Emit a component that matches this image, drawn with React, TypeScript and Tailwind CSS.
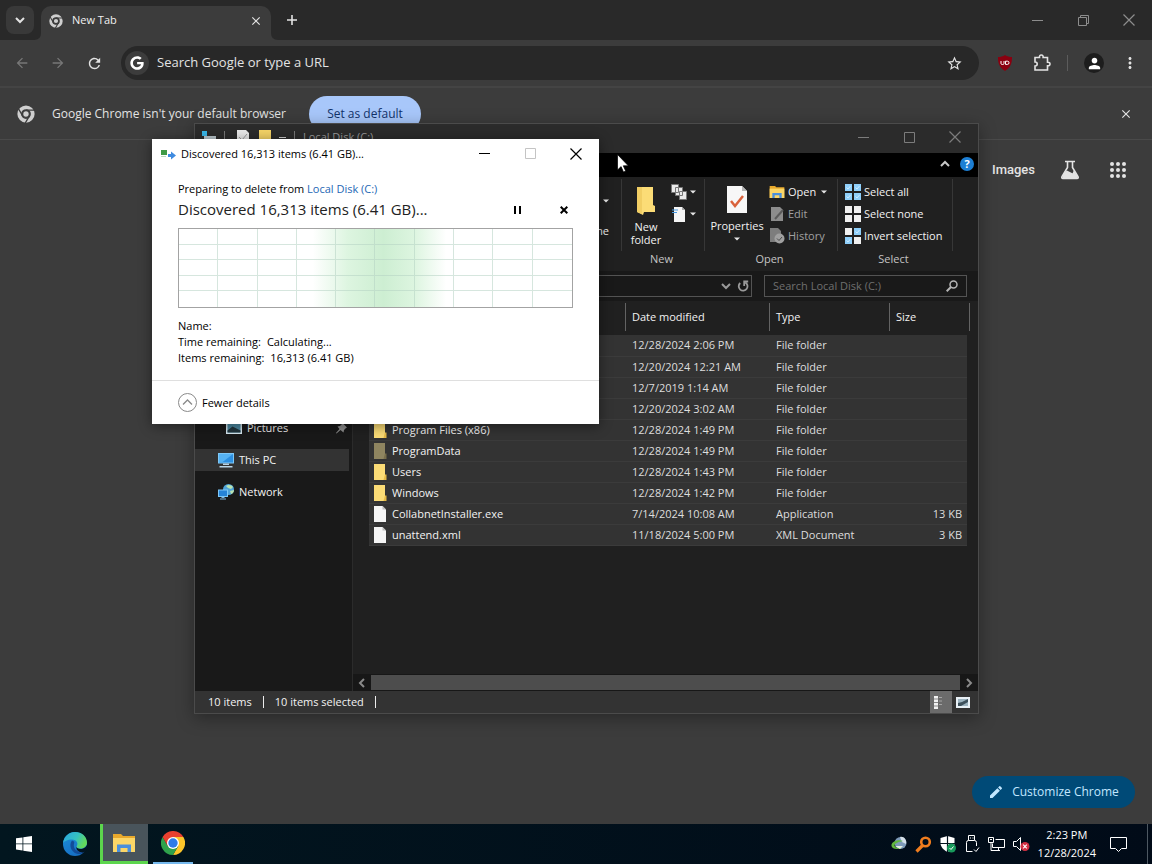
import type { ReactNode } from "react";
import { FaGoogle } from "react-icons/fa6";
import {
  MdArrowBack,
  MdArrowForward,
  MdClose,
  MdEdit,
  MdMoreVert,
  MdPerson,
  MdRefresh,
  MdStarBorder,
} from "react-icons/md";

const files = [
  { name: "", date: "12/28/2024 2:06 PM", type: "File folder", size: "", icon: "folder" },
  { name: "", date: "12/20/2024 12:21 AM", type: "File folder", size: "", icon: "folder" },
  { name: "", date: "12/7/2019 1:14 AM", type: "File folder", size: "", icon: "folder" },
  { name: "", date: "12/20/2024 3:02 AM", type: "File folder", size: "", icon: "folder" },
  { name: "Program Files (x86)", date: "12/28/2024 1:49 PM", type: "File folder", size: "", icon: "folder" },
  { name: "ProgramData", date: "12/28/2024 1:49 PM", type: "File folder", size: "", icon: "hidden" },
  { name: "Users", date: "12/28/2024 1:43 PM", type: "File folder", size: "", icon: "folder" },
  { name: "Windows", date: "12/28/2024 1:42 PM", type: "File folder", size: "", icon: "folder" },
  { name: "CollabnetInstaller.exe", date: "7/14/2024 10:08 AM", type: "Application", size: "13 KB", icon: "file" },
  { name: "unattend.xml", date: "11/18/2024 5:00 PM", type: "XML Document", size: "3 KB", icon: "file" },
];

/* ---------- icons ---------- */

function Minimize() {
  return (
    <svg width="11" height="11" viewBox="0 0 11 11" stroke="currentColor">
      <path d="M0 5.5h11" />
    </svg>
  );
}

function Maximize() {
  return (
    <svg width="11" height="11" viewBox="0 0 11 11" fill="none" stroke="currentColor">
      <path d="M.5.5h10v10H.5z" />
    </svg>
  );
}

function Restore() {
  return (
    <svg width="11" height="11" viewBox="0 0 11 11" fill="none" stroke="currentColor">
      <path d="M.5 2.5h8v8h-8zM2.5 2.5v-2h8v8h-2" />
    </svg>
  );
}

function Close() {
  return (
    <svg width="12" height="12" viewBox="0 0 12 12" stroke="currentColor" strokeWidth="1.2">
      <path d="M.5.5l11 11M11.5.5l-11 11" />
    </svg>
  );
}

function Caret() {
  return (
    <svg width="6" height="4" viewBox="0 0 6 4" fill="#e6e6e6">
      <path d="M0 .5h6L3 3.5z" />
    </svg>
  );
}

function Chevron({ className }: { className?: string }) {
  return (
    <svg width="10" height="10" viewBox="0 0 10 10" fill="none" stroke="currentColor" strokeWidth="2" className={className}>
      <path d="M1 3l4 4 4-4" />
    </svg>
  );
}

function ChromeMono({ size }: { size: number }) {
  return (
    <svg width={size} height={size} viewBox="0 0 24 24" fill="none" stroke="#cfcfcf">
      <circle cx="12" cy="12" r="9" strokeWidth="5" />
      <circle cx="12" cy="12" r="4.500" fill="#cfcfcf" stroke="#3c3c3c" strokeWidth="1.800" />
      <path d="M12 6.800h11M7.500 14.600L2 5M16.500 14.600L11 24" stroke="#3c3c3c" strokeWidth="1.800" />
    </svg>
  );
}

function FileIcon({ kind }: { kind: string }) {
  if (kind === "file") {
    return (
      <svg width="14" height="16" viewBox="0 0 14 16">
        <path d="M1 0h8.500L13 3.500V16H1z" fill="#f5f5f5" />
        <path d="M9.500 0v3.500H13z" fill="#bdbdbd" />
      </svg>
    );
  }
  const hidden = kind === "hidden";
  return (
    <svg width="14" height="16" viewBox="0 0 14 16">
      <path d="M1 0h11v12l1 .5V16H1z" fill={hidden ? "#8f8560" : "#fbdc76"} />
      <path d="M12 10.500h1.500V16H10.500z" fill={hidden ? "#776d4a" : "#e5b945"} />
    </svg>
  );
}

function SelectIcon({ cells }: { cells: string[] }) {
  return (
    <svg width="16" height="16" viewBox="0 0 16 16">
      {cells.map((fill, i) => (
        <g key={i}>
          <rect x={i % 2 ? 9 : 0} y={i > 1 ? 9 : 0} width="7" height="7" fill={fill} />
          {fill === "#8fd0fb" && (
            <path
              d={`M${i % 2 ? 10.5 : 1.5} ${i > 1 ? 12.5 : 3.5}l1.500 1.500 2.500-3`}
              fill="none"
              stroke="#cdeaff"
            />
          )}
        </g>
      ))}
    </svg>
  );
}

function FolderOpen({ size }: { size: number }) {
  return (
    <svg width={size} height={size} viewBox="0 0 24 24">
      <path d="M1 3h8l2 2h12v16H1z" fill="#e8a92c" />
      <path d="M1 7h22v14H1z" fill="#fbd667" />
      <path d="M5 13.500h14V21h-3.500v-4h-7v4H5z" fill="#4a8fdb" />
    </svg>
  );
}

function ChromeColor() {
  return (
    <svg width="24" height="24" viewBox="0 0 24 24">
      <path d="M12 12V6h10.400A12 12 0 0 1 12 24l5.200-9z" fill="#fcc52a" />
      <path d="M12 12l5.200 3L12 24A12 12 0 0 1 1.600 6l5.200 9z" fill="#2fa24c" />
      <path d="M12 6h10.400A12 12 0 0 0 1.600 6l5.200 9z" fill="#e8402f" />
      <circle cx="12" cy="12" r="6" fill="#fff" />
      <circle cx="12" cy="12" r="4.700" fill="#2c7be8" />
    </svg>
  );
}

function EdgeLogo() {
  return (
    <svg width="24" height="24" viewBox="0 0 24 24">
      <defs>
        <linearGradient id="edgeTop" x1="0" y1="0" x2="1" y2="0.400">
          <stop offset="0" stopColor="#2aa5e0" />
          <stop offset="0.600" stopColor="#35c1c0" />
          <stop offset="1" stopColor="#63d95c" />
        </linearGradient>
        <linearGradient id="edgeBody" x1="0" y1="0" x2="0.500" y2="1">
          <stop offset="0" stopColor="#1c8fd8" />
          <stop offset="1" stopColor="#1670c4" />
        </linearGradient>
      </defs>
      <circle cx="12" cy="12" r="12" fill="url(#edgeBody)" />
      <path
        d="M.1 11C.8 4.800 6 0 12 0c7 0 12 4.800 12 10.500 0 4-3.200 6-6.500 6-3 0-4.700-1.200-3.700-2.600 1.700-2.500-.3-6.400-4.800-6.400C4.500 7.500 1 9.500.1 11z"
        fill="url(#edgeTop)"
      />
      <path d="M9 8.500C5.500 13 8 20 14 21.800c3 .8 6-.3 8-2.300C19 20.500 11 20 10.800 13.500c0-2 .9-2.700.2-4z" fill="#124c98" />
      <path d="M13.800 14c-1.200 2.200 2.600 3.600 5.700 2.700 2.500-.7 3.800-2.200 4.300-3.700.6 3-.5 6-2.500 7.200-4 1-9.500-2-7.500-6.200z" fill="#021521" />
    </svg>
  );
}

function ThisPcIcon() {
  return (
    <svg width="16" height="16" viewBox="0 0 16 16">
      <path d="M0 1h16v10.500H0z" fill="#7ec8f7" />
      <path d="M1 2h14v8.500H1z" fill="#2d8fe0" />
      <path d="M1 2h14L4 10.500H1z" fill="#56b2f2" />
      <path d="M5 11.500h6V13H5zM1.500 14h13v1.500h-13z" fill="#b9d4e6" />
    </svg>
  );
}

function NetworkIcon() {
  return (
    <svg width="16" height="16" viewBox="0 0 16 16">
      <circle cx="10.500" cy="5.500" r="5.500" fill="#4fa3d8" />
      <path d="M8 2c2-2 6-1 7 1l-2 2-3-1zM12 7l4-1c0 2-1 3.500-3 4z" fill="#b9e3b0" />
      <path d="M0 5.500h10V13H0z" fill="#7ec8f7" />
      <path d="M1 6.500h8V12H1z" fill="#2583d8" />
      <path d="M3.500 13h3v1h-3zM2 14.500h6v1H2z" fill="#7fb5dd" />
    </svg>
  );
}

/* ---------- browser ---------- */

function TabStrip() {
  return (
    <header className="flex h-10 items-end bg-[#292929]">
      <button aria-label="Search tabs" className="mb-[6px] ml-[6px] flex h-7 w-7 items-center justify-center rounded-lg bg-[#393939]">
        <Chevron />
      </button>
      <svg width="7" height="7" viewBox="0 0 7 7" fill="#3c3c3c">
        <path d="M7 0v7H0q7 0 7-7z" />
      </svg>
      <div className="flex h-[34px] w-[230px] items-center rounded-t-[10px] bg-[#3c3c3c] pb-[5px] pl-2">
        <ChromeMono size={14} />
        <span className="ml-[9px] flex-1 text-[11px] text-[#f0f0f0]">New Tab</span>
        <button aria-label="Close tab" className="mr-2">
          <MdClose size={14} />
        </button>
      </div>
      <svg width="7" height="7" viewBox="0 0 7 7" fill="#3c3c3c">
        <path d="M0 0v7h7q-7 0-7-7z" />
      </svg>
      <button aria-label="New tab" className="mb-[14px] ml-2">
        <svg width="12" height="12" viewBox="0 0 12 12" stroke="currentColor" strokeWidth="1.600">
          <path d="M6 1v10M1 6h10" />
        </svg>
      </button>
      <div className="ml-auto flex h-10 text-[#8d8d8d]">
        <button aria-label="Minimize" className="flex w-[46px] items-center justify-center"><Minimize /></button>
        <button aria-label="Restore" className="flex w-[46px] items-center justify-center"><Restore /></button>
        <button aria-label="Close" className="flex w-[46px] items-center justify-center"><Close /></button>
      </div>
    </header>
  );
}

function Toolbar() {
  return (
    <div className="flex h-12 items-center border-b-2 border-[#444] pr-[13px] pl-[14px]">
      <button aria-label="Back" className="mr-5 text-[#777]"><MdArrowBack size={16} /></button>
      <button aria-label="Forward" className="mr-5 text-[#777]"><MdArrowForward size={16} /></button>
      <button aria-label="Reload" className="mr-[18px]"><MdRefresh size={17} /></button>
      <div className="flex h-[34px] flex-1 items-center rounded-full bg-[#282828] pr-4 pl-1">
        <span className="flex h-6 w-6 items-center justify-center rounded-full bg-[#3c3c3c]">
          <FaGoogle size={14} className="text-white" />
        </span>
        <input
          aria-label="Address and search bar"
          placeholder="Search Google or type a URL"
          className="ml-2 min-w-0 flex-1 bg-transparent text-[13px] outline-none placeholder:text-[#e3e3e3]"
        />
        <button aria-label="Bookmark this tab"><MdStarBorder size={17} /></button>
      </div>
      <button aria-label="uBlock Origin" className="ml-[18px]">
        <svg width="16" height="16" viewBox="0 0 16 16">
          <path d="M8 0c2 1.500 4.500 2 7 2 0 6-1 10-7 14C2 12 1 8 1 2c2.500 0 5-.5 7-2z" fill="#8b0010" />
          <path d="M4 6v2.500q0 1 1.500 1t1.500-1V6M8.500 6.200h2q1.500 0 1.500 1.600t-1.500 1.600h-2z" fill="none" stroke="#fff" />
        </svg>
      </button>
      <button aria-label="Extensions" className="ml-5">
        <svg width="18" height="18" viewBox="0 0 18 18" fill="none" stroke="currentColor" strokeWidth="1.600">
          <path d="M2 3.500h4.500q-.3-2.500 1.800-2.500t1.800 2.500h4.400v4.700q2.500-.2 2.500 1.800t-2.500 1.800V16H2v-4q2.200 0 2.200-2T2 8z" />
        </svg>
      </button>
      <span className="ml-4 h-4 w-px bg-[#5c5c5c]" />
      <button aria-label="Profile" className="ml-4 flex h-5 w-5 items-center justify-center rounded-full bg-[#1d1d1d] text-white">
        <MdPerson size={17} />
      </button>
      <button aria-label="Menu" className="ml-[17px]"><MdMoreVert size={18} /></button>
    </div>
  );
}

function InfoBar() {
  return (
    <div className="flex h-[52px] items-center border-b border-[#4a4a4a] pr-[19px] pl-[17px]">
      <ChromeMono size={18} />
      <span className="ml-[17px] w-[241px] text-[12px]">Google Chrome isn't your default browser</span>
      <button className="ml-4 h-9 w-28 rounded-full bg-[#a8c7fa] text-[12px] font-medium text-[#12336b]">Set as default</button>
      <button aria-label="Dismiss" className="ml-auto"><MdClose size={14} /></button>
    </div>
  );
}

function NewTabPage() {
  return (
    <main className="flex flex-1 flex-col items-end justify-between pb-4">
      <nav className="flex items-center pt-5 pr-[26px]">
        <a href="#images" className="font-[Roboto,sans-serif] text-[13px] font-medium">Images</a>
        <button aria-label="Labs" className="ml-[25px]">
          <svg width="20" height="20" viewBox="0 0 20 20" fill="none" stroke="currentColor" strokeWidth="1.600">
            <path d="M5 1.500h10M7.500 1.500v6L2 16.500q-.8 2 1 2h14q1.800 0 1-2l-5.500-9v-6" />
            <path d="M4.500 13.500l2.500-2 6 3 1-2.500 3 4.500v1.500H3z" fill="currentColor" />
          </svg>
        </button>
        <button aria-label="Google apps" className="ml-[30px]">
          <svg width="16" height="16" viewBox="0 0 16 16" fill="currentColor">
            {[2, 8, 14].map((y) => [2, 8, 14].map((x) => <circle key={`${x}${y}`} cx={x} cy={y} r="2" />))}
          </svg>
        </button>
      </nav>
      <button className="mr-[17px] flex h-8 w-[163px] items-center justify-center gap-2 rounded-full bg-[#004a77] text-[12px] font-medium text-[#c2e7ff]">
        <MdEdit size={16} />
        Customize Chrome
      </button>
    </main>
  );
}

/* ---------- file explorer ---------- */

function RibbonGroup({ label, width, children }: { label: string; width: string; children: ReactNode }) {
  return (
    <section className={`flex flex-col pt-[2px] ${width}`}>
      <div className="flex h-[72px] border-r border-[#373737] pt-[2px]">{children}</div>
      <div className="pr-1 text-center leading-4 text-[#c4c4c4]">{label}</div>
    </section>
  );
}

function RibbonButton({ icon, children, disabled }: { icon: ReactNode; children: ReactNode; disabled?: boolean }) {
  return (
    <button disabled={disabled} className="flex h-[22px] items-center gap-[3px] whitespace-nowrap disabled:text-[#a0a0a0]">
      {icon}
      {children}
    </button>
  );
}

function Ribbon() {
  const on = "#8fd0fb";
  const off = "#f0f0f0";
  return (
    <div className="flex h-[94px] bg-[#202020]">
      <section className="flex w-[427px] flex-col pt-[2px]">
        <div className="flex h-[72px] items-end justify-end border-r border-[#373737] pr-3 pb-3">
          <div className="flex flex-col items-end gap-5">
            <Caret />
            <span>Rename</span>
          </div>
        </div>
      </section>
      <RibbonGroup label="New" width="w-[83px]">
        <button className="flex w-12 flex-col items-center leading-[13px]">
          <svg width="20" height="30" viewBox="0 0 20 30" className="mt-[5px] mb-1">
            <path d="M1 1h16v18l2 1v6H8l-1 3-6-3z" fill="#fbdc76" />
            <path d="M1 1h5v27l-5-2z" fill="#f1ce64" />
          </svg>
          New folder
        </button>
        <div className="flex flex-col pl-px">
          <RibbonButton
            icon={
              <svg width="16" height="16" viewBox="0 0 16 16" stroke="#777" fill="#eaeaea">
                <path d="M.5.5h7v8h-7zM4.500 3.500h7v8h-7zM8.500 7.500h7v8h-7z" />
              </svg>
            }
          >
            <Caret />
          </RibbonButton>
          <RibbonButton
            icon={
              <svg width="16" height="16" viewBox="0 0 16 16">
                <path d="M3 1h8l3 3v12H3z" fill="#f5f5f5" />
                <path d="M11 1v3h3z" fill="#aaa" />
                <path d="M1 4h6M1 6.500h5" stroke="#4a9be0" />
              </svg>
            }
          >
            <Caret />
          </RibbonButton>
        </div>
      </RibbonGroup>
      <RibbonGroup label="Open" width="w-[133px]">
        <button className="flex w-16 flex-col items-center leading-[14px]">
          <svg width="22" height="29" viewBox="0 0 22 29" className="mt-1 mb-[5px]">
            <path d="M1 1h15l5 5v22H1z" fill="#f7f7f7" />
            <path d="M16 1v5h5z" fill="#b5b5b5" />
            <path d="M5 16l4 5 8-10" fill="none" stroke="#d9623b" strokeWidth="2.500" />
          </svg>
          Properties
          <span className="mt-1"><Caret /></span>
        </button>
        <div className="flex flex-col">
          <RibbonButton icon={<FolderOpen size={16} />}>
            Open
            <span className="ml-[2px]"><Caret /></span>
          </RibbonButton>
          <RibbonButton
            disabled
            icon={
              <svg width="16" height="16" viewBox="0 0 16 16">
                <path d="M2 1h9l3 3v11H2z" fill="#8c8c8c" />
                <path d="M14 4l-8 9" stroke="#5a5a5a" strokeWidth="2" />
              </svg>
            }
          >
            Edit
          </RibbonButton>
          <RibbonButton
            disabled
            icon={
              <svg width="16" height="16" viewBox="0 0 16 16">
                <path d="M1 0h8l3 3v11H1z" fill="#7d7d7d" />
                <circle cx="10.500" cy="10.500" r="5" fill="#a0a0a0" />
                <path d="M8 10.500l2 2 3-3.500" fill="none" stroke="#4a4a4a" />
              </svg>
            }
          >
            History
          </RibbonButton>
        </div>
      </RibbonGroup>
      <RibbonGroup label="Select" width="w-[115px]">
        <div className="flex flex-col pl-[7px]">
          <RibbonButton icon={<SelectIcon cells={[on, on, on, on]} />}>Select all</RibbonButton>
          <RibbonButton icon={<SelectIcon cells={[off, off, off, off]} />}>Select none</RibbonButton>
          <RibbonButton icon={<SelectIcon cells={[off, on, on, off]} />}>Invert selection</RibbonButton>
        </div>
      </RibbonGroup>
    </div>
  );
}

function ExplorerTitle() {
  return (
    <div className="flex h-[29px] items-center bg-[#2b2b2b] pb-[3px] pl-[7px]">
      <svg width="14" height="14" viewBox="0 0 14 14">
        <path d="M0 1h5v5H0z" fill="#38b6e8" />
        <path d="M2 6h12v5H2z" fill="#b8c4ca" />
      </svg>
      <span className="ml-2 h-3 w-px bg-[#777]" />
      <svg width="12" height="14" viewBox="0 0 12 14" className="ml-3">
        <path d="M0 0h9l3 3v11H0z" fill="#e9e9e9" />
        <path d="M2 7l3 3 5-6" stroke="#999" fill="none" />
      </svg>
      <svg width="12" height="14" viewBox="0 0 12 14" className="ml-[10px]">
        <path d="M0 0h12v14H0z" fill="#f4d366" />
      </svg>
      <span className="ml-2 h-px w-[7px] bg-[#ccc]" />
      <span className="ml-2 h-3 w-px bg-[#777]" />
      <span className="ml-2 text-[#999]">Local Disk (C:)</span>
      <div className="ml-auto flex h-full text-[#7c7c7c]">
        <button aria-label="Minimize" className="flex w-[45px] items-center justify-center"><Minimize /></button>
        <button aria-label="Maximize" className="flex w-[46px] items-center justify-center"><Maximize /></button>
        <button aria-label="Close" className="flex w-[46px] items-center justify-center"><Close /></button>
      </div>
    </div>
  );
}

function AddressRow() {
  return (
    <div className="flex h-[30px] items-center justify-end gap-3 bg-[#191919] pr-[11px]">
      <div className="ml-4 flex h-[22px] flex-1 items-center justify-end gap-[6px] border border-[#535353] pr-[2px] text-[#9a9a9a]">
        <button aria-label="Previous locations"><Chevron /></button>
        <button aria-label="Refresh">
          <svg width="12" height="12" viewBox="0 0 12 12" fill="none" stroke="currentColor" strokeWidth="1.800">
            <path d="M3.200 3a4.400 4.400 0 1 0 5 -.6" />
            <path d="M7.200 6V1.500h4" />
          </svg>
        </button>
      </div>
      <div className="flex h-[22px] w-[203px] items-center border border-[#535353] px-2">
        <input
          aria-label="Search Local Disk (C:)"
          placeholder="Search Local Disk (C:)"
          className="min-w-0 flex-1 bg-transparent outline-none placeholder:text-[#6f6f6f]"
        />
        <svg width="12" height="12" viewBox="0 0 12 12" fill="none" stroke="#b5b5b5" strokeWidth="1.500">
          <circle cx="7.500" cy="4.500" r="3.500" />
          <path d="M5 7L.7 11.300" strokeWidth="2" />
        </svg>
      </div>
    </div>
  );
}

function Sidebar() {
  return (
    <aside className="flex w-[158px] flex-col gap-[10px] border-r border-[#2b2b2b] bg-[#191919] pt-[116px] pr-[3px]">
      <a href="#pictures" className="flex h-[22px] items-center pl-[31px]">
        <svg width="16" height="12" viewBox="0 0 16 12">
          <path d="M0 0h16v12H0z" fill="#d6e6ee" />
          <path d="M1.500 1.500h13v9h-13z" fill="#4d8aa3" />
          <path d="M1.500 10.500v-2l5-4 8 4v2z" fill="#22353d" />
        </svg>
        <span className="ml-[5px] flex-1">Pictures</span>
        <svg width="11" height="11" viewBox="0 0 11 11" fill="#8f8f8f" className="mr-[2px]">
          <path d="M6.500 0L11 4.500l-1 .5-2 2-.5 2.500-3-2.500L.5 10.500 0 10l3.500-4L1.500 3.500 4 3l2-2z" />
        </svg>
      </a>
      <a href="#this-pc" className="flex h-[22px] items-center gap-[5px] bg-[#333] pl-[23px]">
        <ThisPcIcon />
        This PC
      </a>
      <a href="#network" className="flex h-[22px] items-center gap-[5px] pl-[23px]">
        <NetworkIcon />
        Network
      </a>
    </aside>
  );
}

function FileList() {
  return (
    <div className="flex min-w-0 flex-1 flex-col bg-[#202020]">
      <div className="flex-1 pl-4">
        <table className="w-[598px] table-fixed border-collapse">
          <thead>
            <tr className="h-[34px] text-left">
              <th aria-label="Name" className="w-[257px] p-0 pb-[2px]"><div className="h-7 border-r border-[#636363]" /></th>
              <th className="w-36 p-0 pb-[2px] font-normal"><div className="h-7 border-r border-[#636363] pl-[6px] leading-7">Date modified</div></th>
              <th className="w-[120px] p-0 pb-[2px] font-normal"><div className="h-7 border-r border-[#636363] pl-[6px] leading-7">Type</div></th>
              <th className="w-[77px] p-0 pb-[2px] font-normal"><div className="-mr-[3px] h-7 border-r border-[#636363] pl-[6px] leading-7">Size</div></th>
            </tr>
          </thead>
          <tbody>
            {files.map((file) => (
              <tr key={file.date + file.type} className="h-[21px] border-b border-[#3b3b3b] bg-[#333]">
                <td className="p-0">
                  <div className="flex items-center gap-[5px] pl-1">
                    <FileIcon kind={file.icon} />
                    {file.name}
                  </div>
                </td>
                <td className="p-0 pl-[6px] text-[#dedede]">{file.date}</td>
                <td className="p-0 pl-[6px] text-[#dedede]">{file.type}</td>
                <td className="p-0 pr-[5px] text-right text-[#dedede]">{file.size}</td>
              </tr>
            ))}
          </tbody>
        </table>
      </div>
      <div className="flex h-[17px] items-center bg-[#171717] text-[#8a8a8a]">
        <button aria-label="Scroll left" className="flex w-[18px] justify-center">
          <Chevron className="rotate-90" />
        </button>
        <div className="h-[15px] flex-1 bg-[#4d4d4d]" />
        <button aria-label="Scroll right" className="flex w-[18px] justify-center">
          <Chevron className="-rotate-90" />
        </button>
      </div>
    </div>
  );
}

function ExplorerWindow() {
  return (
    <section className="absolute top-[123px] left-[194px] flex h-[591px] w-[785px] flex-col border border-[#4b4b4b] text-[11px] leading-4 text-[#f2f2f2] shadow-[0_4px_16px_rgba(0,0,0,0.35)]">
      <ExplorerTitle />
      <div className="flex h-6 items-center justify-end gap-[10px] bg-black pr-1 pb-[2px]">
        <button aria-label="Collapse ribbon" className="text-[#c8c8c8]"><Chevron className="rotate-180" /></button>
        <button aria-label="Help" className="h-[14px] w-[14px] rounded-full bg-[#1d7fd4] text-[11px] leading-[14px] font-bold text-white">?</button>
      </div>
      <Ribbon />
      <AddressRow />
      <div className="flex min-h-0 flex-1">
        <Sidebar />
        <FileList />
      </div>
      <footer className="flex h-[22px] items-center bg-[#333] pl-[13px]">
        <span>10 items</span>
        <span className="mx-[11px] h-3 w-px bg-[#ececec]" />
        <span>10 items selected</span>
        <span className="ml-[11px] h-3 w-px bg-[#ececec]" />
        <button aria-label="Details view" className="ml-auto flex h-[22px] w-[22px] items-center justify-center bg-[#6b6b6b]">
          <svg width="14" height="13" viewBox="0 0 14 13">
            <path d="M0 0h4v13H0z" fill="#f2f2f2" />
            <path d="M0 3h4M0 6.500h4M0 10h4" stroke="#888" />
            <path d="M5 1.500h3M5 5h3M5 8.500h3" stroke="#a5a5a5" />
          </svg>
        </button>
        <button aria-label="Large icons view" className="mr-2 ml-1">
          <svg width="14" height="11" viewBox="0 0 14 11">
            <path d="M0 0h14v11H0z" fill="#e8f0f5" />
            <path d="M2 2h10v7H2z" fill="#9db4c0" />
            <path d="M2 6l4-1 6-3v3L5 9H2z" fill="#3d505b" />
          </svg>
        </button>
      </footer>
    </section>
  );
}

/* ---------- delete dialog ---------- */

function DeleteDialog() {
  return (
    <section role="dialog" aria-label="Discovered 16,313 items" className="absolute top-[139px] left-[152px] w-[447px] bg-white text-[11px] leading-4 text-black shadow-[0_2px_12px_rgba(0,0,0,0.45)]">
      <div className="flex h-[29px] items-center pl-[9px]">
        <svg width="15" height="12" viewBox="0 0 15 12">
          <path d="M0 2h6v5H0z" fill="#3f9a45" />
          <path d="M0 8h5v1H0z" fill="#b9d9bb" />
          <path d="M7 6h3V3.500l5 4-5 4V9H7z" fill="#3f8be0" />
        </svg>
        <span className="ml-[5px] flex-1">Discovered 16,313 items (6.41 GB)...</span>
        <button aria-label="Minimize" className="flex h-full w-[45px] items-center justify-center"><Minimize /></button>
        <button aria-label="Maximize" disabled className="flex h-full w-[46px] items-center justify-center text-[#c4c4c4]"><Maximize /></button>
        <button aria-label="Close" className="flex h-full w-[46px] items-center justify-center"><Close /></button>
      </div>
      <div className="px-[26px] pt-[13px]">
        <p>
          Preparing to delete from <a href="#local-disk" className="text-[#2467b5]">Local Disk (C:)</a>
        </p>
        <div className="flex h-[26px] items-center">
          <h1 className="flex-1 pb-[2px] text-[15px] text-[#222]">Discovered 16,313 items (6.41 GB)...</h1>
          <button aria-label="Pause" className="mr-[38px]">
            <svg width="8" height="8" viewBox="0 0 8 8"><path d="M0 0h2v8H0zM5 0h2v8H5z" /></svg>
          </button>
          <button aria-label="Cancel" className="mr-[5px]">
            <svg width="8" height="8" viewBox="0 0 8 8" stroke="#000" strokeWidth="2"><path d="M.7.7l6.600 6.600M7.300.7L.7 7.300" /></svg>
          </button>
        </div>
        <div className="mt-[5px] grid h-20 grid-cols-10 grid-rows-5 border border-[#a3a3a3] bg-[linear-gradient(90deg,transparent_34%,#ddf5e0_43%,#cdeed2_52%,#ddf5e0_60%,transparent_68%)]">
          {Array.from({ length: 50 }, (_, i) => (
            <span
              key={i}
              className={`border-[#b5d2c2]/55 ${i % 10 < 9 ? "border-r" : ""} ${i < 40 ? "border-b" : ""}`}
            />
          ))}
        </div>
        <dl className="mt-[10px] mb-[14px]">
          <div><dt>Name:</dt></div>
          <div className="flex gap-[6px]"><dt>Time remaining:</dt><dd>Calculating...</dd></div>
          <div className="flex gap-[6px]"><dt>Items remaining:</dt><dd>16,313 (6.41 GB)</dd></div>
        </dl>
      </div>
      <div className="flex h-11 items-center border-t border-[#dfdfdf] px-[26px]">
        <button className="flex items-center gap-[5px]">
          <svg width="19" height="19" viewBox="0 0 19 19" fill="none" stroke="#8a8a8a">
            <circle cx="9.500" cy="9.500" r="9" />
            <path d="M5 11.500l4.500-4.500 4.500 4.500" strokeWidth="1.300" />
          </svg>
          Fewer details
        </button>
      </div>
    </section>
  );
}

/* ---------- taskbar ---------- */

function Taskbar() {
  return (
    <footer className="flex h-10 items-center bg-linear-to-r from-[#02161f] to-[#010b18] text-white">
      <button aria-label="Start" className="flex w-12 justify-center">
        <svg width="16" height="16" viewBox="0 0 16 16" fill="#fff">
          <path d="M0 2.300l6.500-.9v6.100H0zM7.300 1.300L16 0v7.500H7.300zM0 8.300h6.500v6.200L0 13.600zM7.300 8.300H16V16l-8.700-1.300z" />
        </svg>
      </button>
      <button aria-label="Microsoft Edge" className="ml-[3px] flex w-12 justify-center"><EdgeLogo /></button>
      <button aria-label="File Explorer" className="ml-px flex h-10 w-12 items-center justify-center border-b-[3px] border-l-[3px] border-[#5cd64d] bg-[#49545b] pr-[3px]">
        <FolderOpen size={24} />
      </button>
      <button aria-label="Google Chrome" className="ml-[5px] flex h-10 w-10 items-center justify-center border-b-2 border-[#76b9ed]">
        <ChromeColor />
      </button>
      <div className="ml-auto flex items-center gap-2">
        <svg width="16" height="16" viewBox="0 0 16 16">
          <circle cx="9.500" cy="7" r="6" fill="#7d9ab8" />
          <path d="M9 1c4-1 7 3 6 7l-4-2z" fill="#d4dfe8" />
          <path d="M12 5C6 3 0 6 .5 10c.5 3 6 4 10 2-4 .5-7-.5-7-2.500S7 6 12 5z" fill="#62b83e" />
          <path d="M4 10h8l-3 3z" fill="#e6efdf" />
        </svg>
        <svg width="17" height="17" viewBox="0 0 17 17" fill="none" stroke="#f07d1e" strokeWidth="2.600">
          <circle cx="10.500" cy="6" r="4.300" />
          <path d="M7.500 9.500L1.500 15.500" strokeWidth="3.200" />
        </svg>
        <svg width="16" height="17" viewBox="0 0 16 17">
          <path d="M7.500 0l7 2v5c0 4-3 7-7 9-4-2-7-5-7-9V2z" fill="#fff" />
          <path d="M7.500 0v16M0 7.500h15" stroke="#03121d" strokeWidth="1.200" />
          <circle cx="11.500" cy="12" r="4.500" fill="#189a5b" />
          <path d="M9.500 12l1.500 1.500 2.500-3" fill="none" stroke="#fff" />
        </svg>
        <svg width="16" height="18" viewBox="0 0 16 18" fill="none" stroke="#fff">
          <path d="M4.500 5.500v-5h6v5M2.500 16.500v-9q0-2 2-2h6q2 0 2 2V11M2.500 16.500h6M6 3h1M8.500 3h1M10 14.500l2 2 3-4" />
        </svg>
        <svg width="17" height="16" viewBox="0 0 17 16" fill="none" stroke="#fff">
          <path d="M7.500 3.500h9v8h-12v-4M.5 1.500h5v5h-5zM3 6.500v8h9M10.500 11.500v3M2 3.500h2" />
        </svg>
        <svg width="17" height="16" viewBox="0 0 17 16">
          <path d="M.5 5.500h3l4-4v13l-4-4h-3z" fill="none" stroke="#fff" />
          <circle cx="12" cy="10.500" r="4.500" fill="#d32f41" />
          <path d="M10.200 8.700l3.600 3.600M13.800 8.700l-3.600 3.600" stroke="#fff" strokeWidth="1.200" />
        </svg>
        <time className="text-center text-[11px] leading-[18px]">
          2:23 PM
          <br />
          12/28/2024
        </time>
        <button aria-label="Notifications" className="mr-5 ml-[6px]">
          <svg width="17" height="17" viewBox="0 0 17 17" fill="none" stroke="#fff">
            <path d="M.5 1.500h16v11h-5l-3 3-3-3h-5z" />
          </svg>
        </button>
      </div>
      <span className="mr-1 h-10 w-px bg-[#4d5862]" />
    </footer>
  );
}

export default function App() {
  return (
    <div className="relative flex h-screen flex-col overflow-hidden bg-[#3c3c3c] font-['Open_Sans','Noto_Sans',sans-serif] text-[#e3e3e3]">
      <TabStrip />
      <Toolbar />
      <InfoBar />
      <NewTabPage />
      <Taskbar />
      <ExplorerWindow />
      <DeleteDialog />
      <svg width="12" height="19" viewBox="0 0 12 19" className="absolute top-[154px] left-[617px]">
        <path d="M.5.5v15.500l3.600-3.400 2.400 5.500 2.200-1-2.400-5.300h5z" fill="#fff" stroke="#000" strokeWidth="0.700" />
      </svg>
    </div>
  );
}
